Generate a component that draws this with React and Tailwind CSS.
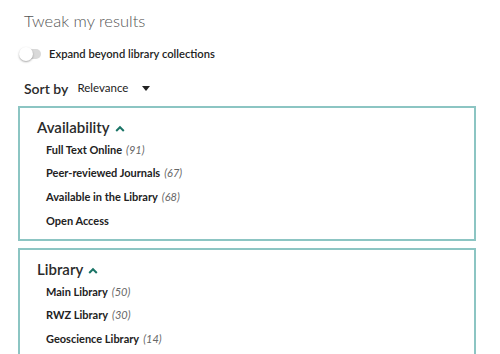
import React from 'react';

const groups = [
  {
    title: 'Availability',
    items: [
      { label: 'Full Text Online', count: 91 },
      { label: 'Peer-reviewed Journals', count: 67 },
      { label: 'Available in the Library', count: 68 },
      { label: 'Open Access' },
    ],
  },
  {
    title: 'Library',
    items: [
      { label: 'Main Library', count: 50 },
      { label: 'RWZ Library', count: 30 },
      { label: 'Geoscience Library', count: 14 },
    ],
  },
];

const ChevronUp = () => (
  <svg width="10" height="7" viewBox="0 0 10 7" className="ml-[5px] mt-[2px]">
    <path d="M1.2 6 L5 2.2 L8.8 6" fill="none" stroke="#1a7466" strokeWidth="2" />
  </svg>
);

const FacetBox = ({ group, last }) => (
  <div
    className={`ml-[18px] w-[458px] border-2 border-[#8cc5c3] pl-[17px] pt-[8px] ${
      last ? 'mt-[7px] h-[120px]' : 'h-[135px]'
    }`}
  >
    <div className="flex items-center h-[22px]">
      <span className="text-[15px] font-semibold text-[#2b2b2b]">{group.title}</span>
      <ChevronUp />
    </div>
    <ul className="pl-[9px]">
      {group.items.map((it) => (
        <li key={it.label} className="h-[23.7px] flex items-center text-[11px] text-[#222]">
          <span className="font-bold">{it.label}</span>
          {it.count !== undefined && (
            <span className="ml-[4px] italic text-[#666]">({it.count})</span>
          )}
        </li>
      ))}
    </ul>
  </div>
);

export default function App() {
  return (
    <div
      className="w-[500px] h-[354px] overflow-hidden bg-white"
      style={{ fontFamily: 'Lato, "Liberation Sans", sans-serif' }}
    >
      <h1 className="pl-[24px] pt-[8px] text-[16.5px] leading-[26px] font-light text-[#555]">
        Tweak my results
      </h1>

      <div className="flex items-center pl-[20px] mt-[12px] h-[16px]">
        <div className="relative w-[21px] h-[10px] rounded-full bg-[#d9d9d9]">
          <div className="absolute -left-[1px] -top-[2px] w-[14px] h-[14px] rounded-full bg-white shadow-[0_1px_2px_rgba(0,0,0,0.35)]" />
        </div>
        <span className="ml-[8px] text-[11.2px] font-semibold text-[#222]">
          Expand beyond library collections
        </span>
      </div>

      <div className="flex items-center pl-[24px] mt-[16px] h-[20px]">
        <span className="text-[14px] font-semibold text-[#2b2b2b]">Sort by</span>
        <span className="ml-[9px] text-[11.5px] text-[#222]">Relevance</span>
        <svg width="8" height="5" viewBox="0 0 8 5" className="ml-[14px]">
          <path d="M0 0 H8 L4 5 Z" fill="#222" />
        </svg>
      </div>

      <div className="mt-[8px]">
        <FacetBox group={groups[0]} />
        <FacetBox group={groups[1]} last />
      </div>
    </div>
  );
}
